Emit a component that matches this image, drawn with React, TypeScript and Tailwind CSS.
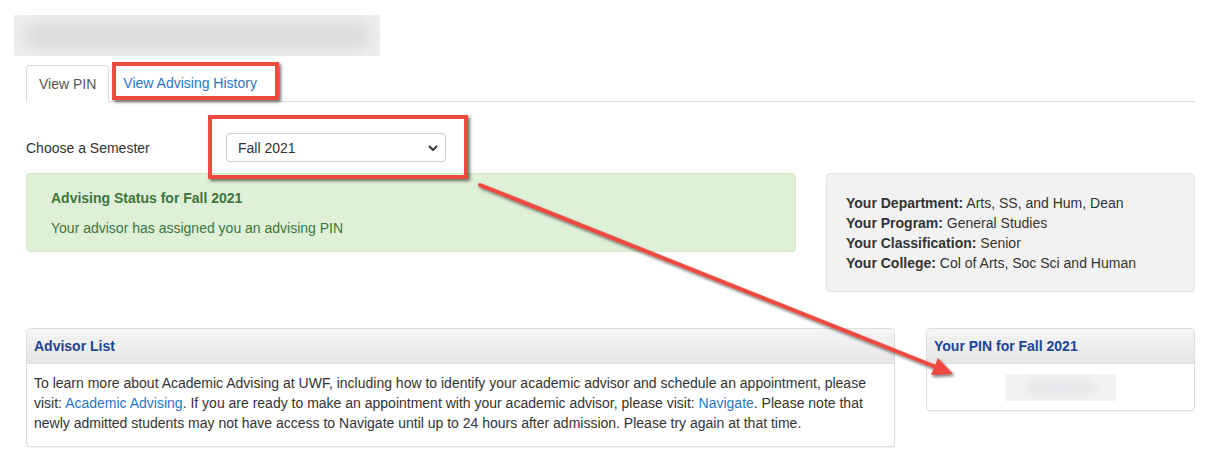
import React from "react";

export default function App() {
  return (
    <div
      className="relative w-[1230px] h-[470px] overflow-hidden bg-white text-[14px] leading-[20px] text-[#333333]"
      style={{ fontFamily: '"Liberation Sans", Arial, Helvetica, sans-serif' }}
    >
      {/* blurred heading */}
      <div className="ml-[14px] mt-[15px] h-[41px] w-[366px] overflow-hidden bg-[#eeeeee]">
        <div className="mx-[10px] my-[7px] h-[27px] rounded-full bg-[#dadada] blur-[8px]" />
      </div>

      <div className="ml-[26px] mr-[35px]">
        {/* tabs */}
        <div className="mt-[9px] flex h-[37px] items-end border-b border-[#dddddd]">
          <div className="-mb-px flex h-[37px] items-center rounded-t-[4px] border border-[#dddddd] border-b-white bg-white px-[12px] text-[#555555]">
            View PIN
          </div>
          <div className="ml-[2px] flex h-[37px] items-center px-[12px] text-[#2a78c5]">View Advising History</div>
        </div>

        {/* semester chooser */}
        <div className="mt-[31px] flex h-[29px] items-center">
          <div className="w-[200px]">Choose a Semester</div>
          <div className="flex h-[29px] w-[220px] items-center justify-between rounded-[4px] border border-[#cccccc] bg-white pl-[11px] pr-[7px] text-[#333333]">
            <span>Fall 2021</span>
            <svg width="10" height="10" viewBox="0 0 10 10">
              <path d="M1.5 3.5 L5 7 L8.5 3.5" fill="none" stroke="#333" strokeWidth="1.8" strokeLinecap="round" strokeLinejoin="round" />
            </svg>
          </div>
        </div>

        {/* status row */}
        <div className="mt-[11px] flex items-start gap-[30px]">
          <div className="h-[79px] w-[770px] rounded-[4px] border border-[#d6e9c6] bg-[#dff0d8] px-[24px] pt-[14px] text-[#3c763d]">
            <div className="font-bold">Advising Status for Fall 2021</div>
            <div className="mt-[10px]">Your advisor has assigned you an advising PIN</div>
          </div>
          <div className="h-[119px] flex-1 rounded-[4px] border border-[#e3e3e3] bg-[#f2f2f2] px-[19px] pt-[19px]">
            <div><b>Your Department:</b> Arts, SS, and Hum, Dean</div>
            <div><b>Your Program:</b> General Studies</div>
            <div><b>Your Classification:</b> Senior</div>
            <div><b>Your College:</b> Col of Arts, Soc Sci and Human</div>
          </div>
        </div>

        {/* panels row */}
        <div className="mt-[36px] flex items-start gap-[31px]">
          <div className="w-[869px] overflow-hidden rounded-[4px] border border-[#dddddd] bg-white shadow-[0_1px_1px_rgba(0,0,0,0.05)]">
            <div className="flex h-[35px] items-center border-b border-[#dddddd] bg-gradient-to-b from-[#f5f5f5] to-[#e6e6e6] px-[7px] font-bold text-[#1c4597]">
              Advisor List
            </div>
            <div className="px-[7px] pb-[13px] pt-[9px]">
              To learn more about Academic Advising at UWF, including how to identify your academic advisor and schedule an appointment, please
              <br />
              visit: <span className="text-[#2a78c5]">Academic Advising</span>. If you are ready to make an appointment with your academic advisor, please visit:{" "}
              <span className="text-[#2a78c5]">Navigate</span>. Please note that
              <br />
              newly admitted students may not have access to Navigate until up to 24 hours after admission. Please try again at that time.
            </div>
          </div>
          <div className="flex-1 overflow-hidden rounded-[4px] border border-[#dddddd] bg-white shadow-[0_1px_1px_rgba(0,0,0,0.05)]">
            <div className="flex h-[35px] items-center border-b border-[#dddddd] bg-gradient-to-b from-[#f5f5f5] to-[#e6e6e6] px-[7px] font-bold text-[#1c4597]">
              Your PIN for Fall 2021
            </div>
            <div className="flex justify-center pb-[9px] pt-[10px]">
              <div className="h-[27px] w-[111px] overflow-hidden bg-[#f3f3f3]">
                <div className="mx-[20px] my-[6px] h-[15px] rounded-full bg-[#e4e5e8] blur-[6px]" />
              </div>
            </div>
          </div>
        </div>
      </div>

      {/* annotation: red boxes */}
      <div className="pointer-events-none absolute left-[112px] top-[62px] h-[38px] w-[167px] border-[4px] border-[#ee4a3f] shadow-[2px_2px_3px_rgba(0,0,0,0.55)]" />
      <div className="pointer-events-none absolute left-[208px] top-[115px] h-[64px] w-[260px] border-[4px] border-[#ee4a3f] shadow-[2px_2px_3px_rgba(0,0,0,0.55)]" />

      {/* annotation: arrow */}
      <svg className="pointer-events-none absolute left-0 top-0" width="1230" height="470" viewBox="0 0 1230 470">
        <defs>
          <filter id="sh" x="-10%" y="-10%" width="120%" height="120%">
            <feDropShadow dx="1.5" dy="2" stdDeviation="1.5" floodColor="#000" floodOpacity="0.55" />
          </filter>
        </defs>
        <g filter="url(#sh)">
          <line x1="480" y1="185" x2="936" y2="367" stroke="#ee4a3f" strokeWidth="4" strokeLinecap="round" />
          <polygon points="953,374 931,375 938,358" fill="#ee4a3f" />
        </g>
      </svg>
    </div>
  );
}
